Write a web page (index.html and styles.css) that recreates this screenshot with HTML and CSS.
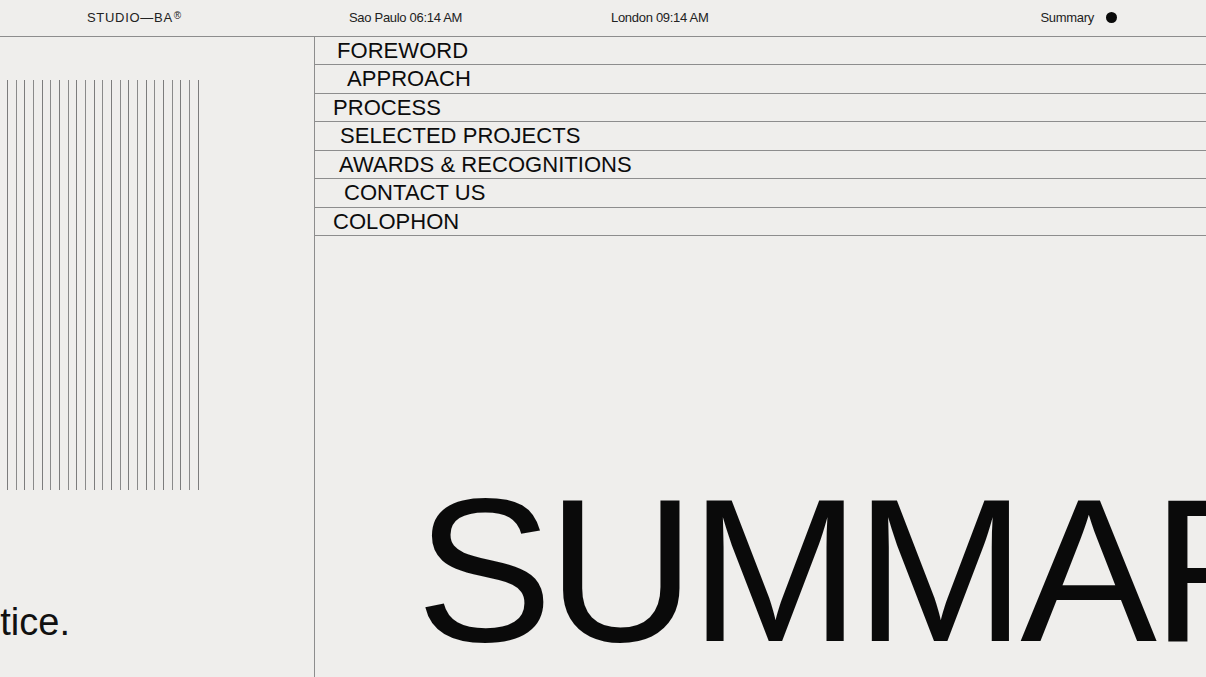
FILE: index.html
```html
<!DOCTYPE html>
<html lang="en">
<head>
<meta charset="utf-8">
<title>Studio—BA · Summary</title>
<link rel="stylesheet" href="styles.css">
</head>
<body>
<header class="topbar">
  <span class="brand">STUDIO—BA<span class="reg">®</span></span>
  <span class="clock">Sao Paulo 06:14 AM</span>
  <span class="clock">London 09:14 AM</span>
  <span class="current">Summary <span class="dot"></span></span>
</header>
<main class="layout">
  <aside class="side">
    <div class="stripes">
      <i></i><i></i><i></i><i></i><i></i><i></i><i></i><i></i><i></i><i></i><i></i><i></i>
      <i></i><i></i><i></i><i></i><i></i><i></i><i></i><i></i><i></i><i></i><i></i>
    </div>
    <p class="tagline"><span>practice.</span></p>
  </aside>
  <section class="content">
    <nav class="menu">
      <ul class="menu-list">
        <li class="menu-item shift-22">FOREWORD</li>
        <li class="menu-item shift-32">APPROACH</li>
        <li class="menu-item shift-18">PROCESS</li>
        <li class="menu-item shift-25">SELECTED PROJECTS</li>
        <li class="menu-item shift-24">AWARDS &amp; RECOGNITIONS</li>
        <li class="menu-item shift-29">CONTACT US</li>
        <li class="menu-item shift-18">COLOPHON</li>
      </ul>
    </nav>
    <h1 class="title">SUMMARY</h1>
  </section>
</main>
</body>
</html>
```

FILE: styles.css
```css
* {
  box-sizing: border-box;
}

html,
body {
  margin: 0;
  padding: 0;
  height: 100%;
}

body {
  background: #efeeec;
  color: #111;
  font-family: "Liberation Sans", Arial, sans-serif;
  overflow: hidden;
  display: flex;
  flex-direction: column;
}

/* ---------- top bar ---------- */
.topbar {
  flex: none;
  height: 37px;
  border-bottom: 1px solid #8d8d8d;
  display: grid;
  grid-template-columns: 262px 262px 1fr auto;
  align-items: center;
  padding: 0 89px 1px 87px;
  font-size: 13px;
  letter-spacing: -0.3px;
  color: #222;
}

.brand {
  white-space: nowrap;
  letter-spacing: 0.7px;
  display: flex;
  align-items: flex-start;
}

.reg {
  font-size: 10px;
  line-height: 1;
  margin-left: 1px;
  margin-top: 1px;
  letter-spacing: 0;
}

.current {
  display: flex;
  align-items: center;
  gap: 12px;
}

.dot {
  width: 11px;
  height: 11px;
  border-radius: 50%;
  background: #0a0a0a;
}

/* ---------- layout ---------- */
.layout {
  flex: 1;
  min-height: 0;
  display: flex;
}

.side {
  flex: none;
  width: 315px;
  border-right: 1px solid #8d8d8d;
  display: flex;
  flex-direction: column;
  padding-top: 43px;
  overflow: hidden;
}

.stripes {
  margin-left: 7px;
  width: 192px;
  height: 410px;
  display: flex;
  justify-content: space-between;
}

.stripes i {
  width: 1px;
  background: #8a8a8a;
}

.stripes i:nth-child(odd) {
  background: #7c7c7c;
}

.tagline {
  margin: auto 0 0;
  padding-bottom: 31px;
  width: 70px;
  display: flex;
  justify-content: flex-end;
  overflow: hidden;
  white-space: nowrap;
  font-size: 38px;
  line-height: 1.2;
  color: #111;
}

/* ---------- content ---------- */
.content {
  flex: 1;
  min-width: 0;
  display: flex;
  flex-direction: column;
  overflow: hidden;
}

.menu-list {
  list-style: none;
  margin: 0;
  padding: 0;
}

.menu-item {
  height: 28.43px;
  border-bottom: 1px solid #8d8d8d;
  font-size: 22px;
  line-height: 27.43px;
  letter-spacing: 0.05px;
  color: #0c0c0c;
  white-space: nowrap;
}

.shift-18 { padding-left: 18px; }
.shift-22 { padding-left: 22px; }
.shift-24 { padding-left: 24px; }
.shift-25 { padding-left: 25px; }
.shift-29 { padding-left: 29px; }
.shift-32 { padding-left: 32px; }

.title {
  margin: auto 0 0;
  padding: 0 0 5px 101px;
  font-size: 205px;
  font-weight: 400;
  line-height: 1;
  letter-spacing: -5.5px;
  white-space: nowrap;
  color: #0a0a0a;
}
```
